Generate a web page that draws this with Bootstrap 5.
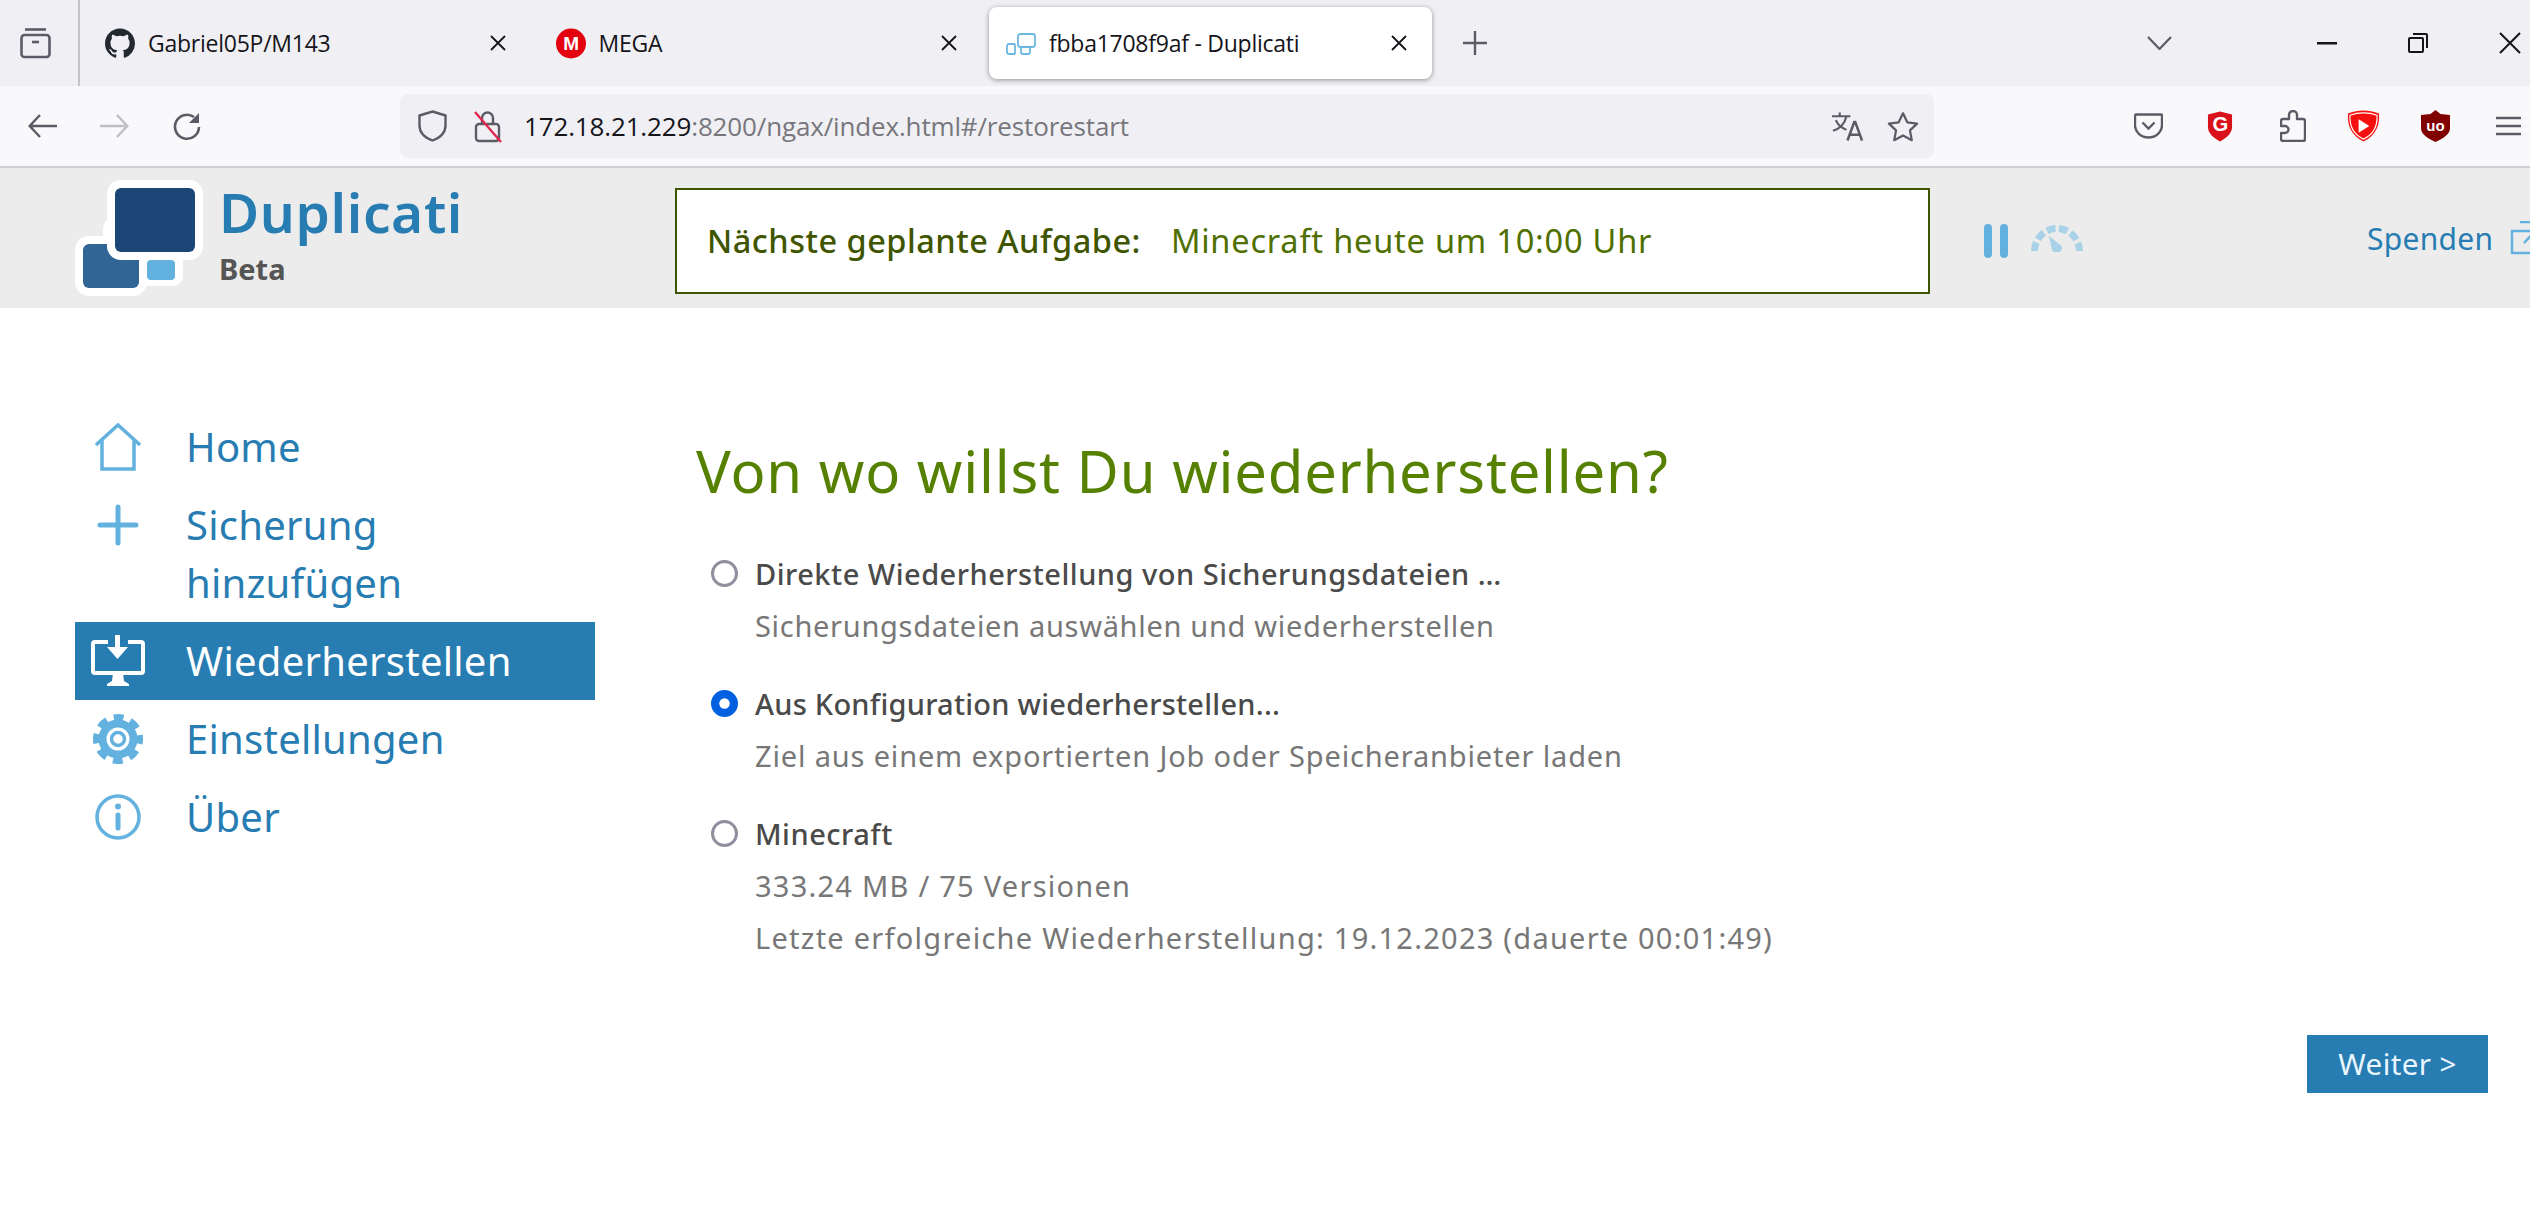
<!DOCTYPE html>
<html lang="de">
<head>
<meta charset="UTF-8">
<title>fbba1708f9af - Duplicati</title>
<link href="https://cdn.jsdelivr.net/npm/bootstrap@5.3.3/dist/css/bootstrap.min.css" rel="stylesheet">
<style>
  html, body { height: 1228px; overflow: hidden; background: #fff; }
  body { font-family: "Noto Sans", sans-serif; }

  /* browser chrome */
  .tab-strip { height: 86px; background: #f0f0f4; font-family: "Open Sans", sans-serif; font-size: 23px; color: #15141a; }
  .strip-toggle { width: 80px; height: 86px; padding-left: 20px; border-right: 2px solid #c4c4c8; flex: none; margin-right: 8px; }
  .ff-tab { width: 443px; height: 72px; padding-left: 17px; margin-right: 7.5px; border-radius: 8px; flex: none; letter-spacing: -.25px; }
  .ff-tab.is-on { background: #fff; box-shadow: 0 1px 5px rgba(0,0,0,.4); }
  .tab-fav { width: 30px; height: 31px; margin-right: 13px; flex: none; }
  .tab-close { width: 18px; height: 18px; margin-right: 24px; flex: none; }
  .tab-label { flex-grow: 1; white-space: nowrap; }
  .new-tab { margin-left: 23px; flex: none; }
  .win-chev { margin-left: 660px; flex: none; }
  .win-min { margin-left: 145px; flex: none; }
  .win-max { margin-left: 71px; flex: none; }
  .win-x { margin-left: 71px; flex: none; }

  .tool-bar { height: 82px; background: #f9f9fb; border-bottom: 2px solid #cfcfd1; padding-left: 28px; flex: none; }
  .nav-gap { margin-left: 43px; }
  .url-box { width: 1534px; height: 64px; background: #f0f0f4; border-radius: 8px; margin-left: 198px; padding-left: 17px; flex: none; margin-right: 200px; font-family: "Open Sans", sans-serif; font-size: 26px; color: #77767c; letter-spacing: -.15px; white-space: nowrap; }
  .url-host { color: #15141a; }
  .url-text { margin-left: 22px; }
  .lock-ic { margin-left: 26px; flex: none; }
  .star-ic { margin-left: 24px; margin-right: 15px; flex: none; }
  .ext-btn { flex: none; }
  .ext-g { margin-left: 44px; }
  .ext-puzzle { margin-left: 47px; }
  .ext-play { margin-left: 41px; }
  .ext-ub { margin-left: 41px; }
  .ext-menu { margin-left: 46px; }

  /* duplicati header */
  .app-head { height: 140px; background: #ececec; padding-left: 75px; }
  .brand { width: 600px; flex: none; }
  .brand-text { margin-left: 16px; margin-bottom: 8px; }
  .brand-name { font-size: 55px; font-weight: 600; line-height: 62px; color: #277cb2; letter-spacing: .6px; }
  .brand-sub { font-size: 29px; font-weight: 700; line-height: 36px; color: #555; margin-top: 8px; }
  .next-box { width: 1255px; height: 106px; margin-top: 6px; background: #fff; border: 2px solid #3f5500; padding-left: 30px; font-size: 32.5px; flex: none; white-space: nowrap; letter-spacing: .5px; }
  .next-key { color: #3f5500; font-weight: 500; margin-right: 30px; }
  .next-val { color: #4f6f00; letter-spacing: .8px; }
  .pause-ic { margin-left: 54px; margin-top: 6px; flex: none; }
  .gauge-ic { margin-left: 23px; flex: none; }
  .donate { margin-left: 284px; color: #277cb2; font-size: 30px; letter-spacing: .3px; white-space: nowrap; }
  .donate svg { margin-left: 17px; flex: none; }

  /* page */
  .side-col { width: 520px; margin-left: 75px; margin-right: 101px; padding-top: 100px; flex: none; }
  .side-item { padding: 10px 0; color: #277cb2; font-size: 40px; line-height: 58px; letter-spacing: .25px; }
  .side-item.is-on { background: #277cb2; color: #fff; }
  .side-ic { width: 86px; margin-right: 25px; flex: none; height: 58px; }
  .main-col { flex-grow: 1; padding-right: 42px; }
  .page-title { color: #558000; font-size: 58px; line-height: 76px; font-weight: 400; margin: 125px 0 0; letter-spacing: .78px; white-space: nowrap; }
  .opt-list { margin-top: 39px; }
  .opt-row { padding-left: 15px; margin-bottom: 26px; font-size: 29px; line-height: 52px; white-space: nowrap; }
  .opt-row .form-check-input { width: 27px; height: 27px; margin: 12px 17px 0 0; border: 3px solid #8f8f9d; flex: none; }
  .opt-row .form-check-input:checked { background-color: #0060df; border-color: #0060df; }
  .opt-title { color: #4a4a4a; font-weight: 500; letter-spacing: .5px; }
  .opt-title.is-tight { letter-spacing: .25px; }
  .opt-desc { color: #777; letter-spacing: .7px; }
  .opt-desc.is-mid { letter-spacing: .84px; }
  .opt-desc.is-wide { letter-spacing: 1.25px; }
  .next-wrap { margin-top: 71px; }
  .next-btn { background: #277cb2; color: #eaf6ff; font-size: 29.5px; line-height: 58px; width: 181px; height: 58px; padding: 0; border: 0; border-radius: 0; letter-spacing: .4px; }
  .next-btn:hover { background: #277cb2; color: #eaf6ff; }
</style>
</head>
<body>

<!-- tabs -->
<div class="tab-strip d-flex align-items-center">
  <div class="strip-toggle d-flex align-items-center">
    <svg width="31" height="32" viewBox="0 0 31 32" fill="none" stroke="#5b5b66" stroke-width="2.6"><path d="M5 2.5h21"/><rect x="1.5" y="8" width="28" height="22" rx="3"/><path d="M12 15h7"/></svg>
  </div>
  <div class="ff-tab d-flex align-items-center">
    <svg class="tab-fav" viewBox="0 0 16 16" fill="#24292f"><path d="M8 0C3.58 0 0 3.58 0 8c0 3.54 2.29 6.53 5.47 7.59.4.07.55-.17.55-.38 0-.19-.01-.82-.01-1.49-2.01.37-2.53-.49-2.69-.94-.09-.23-.48-.94-.82-1.13-.28-.15-.68-.52-.01-.53.63-.01 1.08.58 1.23.82.72 1.21 1.87.87 2.33.66.07-.52.28-.87.51-1.07-1.78-.2-3.64-.89-3.64-3.95 0-.87.31-1.59.82-2.15-.08-.2-.36-1.02.08-2.12 0 0 .67-.21 2.2.82.64-.18 1.32-.27 2-.27.68 0 1.36.09 2 .27 1.53-1.04 2.2-.82 2.2-.82.44 1.1.16 1.92.08 2.12.51.56.82 1.27.82 2.15 0 3.07-1.87 3.75-3.65 3.95.29.25.54.73.54 1.48 0 1.07-.01 1.93-.01 2.2 0 .21.15.46.55.38A8.013 8.013 0 0016 8c0-4.42-3.58-8-8-8z"/></svg>
    <span class="tab-label">Gabriel05P/M143</span>
    <svg class="tab-close" viewBox="0 0 18 18" stroke="#15141a" stroke-width="1.8"><path d="M2 2l14 14M16 2L2 16"/></svg>
  </div>
  <div class="ff-tab d-flex align-items-center">
    <svg class="tab-fav" viewBox="0 0 30 31"><circle cx="15" cy="15.5" r="15" fill="#e3000f"/><text x="15" y="22" text-anchor="middle" font-family="Liberation Sans" font-weight="700" font-size="19" fill="#fff">M</text></svg>
    <span class="tab-label">MEGA</span>
    <svg class="tab-close" viewBox="0 0 18 18" stroke="#15141a" stroke-width="1.8"><path d="M2 2l14 14M16 2L2 16"/></svg>
  </div>
  <div class="ff-tab is-on d-flex align-items-center">
    <svg class="tab-fav" viewBox="0 -5 30 31" fill="none" stroke="#6db8e2" stroke-width="1.8"><path d="M9 11H3a2 2 0 00-2 2v6a2 2 0 002 2h6"/><path d="M9 11v10"/><path d="M15 15v4a2 2 0 002 2h5a2 2 0 002-2v-4"/><rect x="12" y="1" width="17" height="13" rx="2.500"/></svg>
    <span class="tab-label">fbba1708f9af - Duplicati</span>
    <svg class="tab-close" viewBox="0 0 18 18" stroke="#15141a" stroke-width="1.8"><path d="M2 2l14 14M16 2L2 16"/></svg>
  </div>
  <svg class="new-tab" width="24" height="24" viewBox="0 0 24 24" stroke="#5b5b66" stroke-width="2.4"><path d="M12 0v24M0 12h24"/></svg>
  <svg class="win-chev" width="25" height="14" viewBox="0 0 25 14" fill="none" stroke="#5b5b66" stroke-width="2.2"><path d="M1 1l11.500 12L24 1"/></svg>
  <svg class="win-min" width="20" height="3" viewBox="0 0 20 3"><rect width="20" height="2.500" fill="#15141a"/></svg>
  <svg class="win-max" width="20" height="20" viewBox="0 0 20 20" fill="none" stroke="#15141a" stroke-width="2"><rect x="1" y="5" width="14" height="14" rx="1"/><path d="M5 1h13a1 1 0 011 1v13"/></svg>
  <svg class="win-x" width="22" height="22" viewBox="0 0 22 22" stroke="#15141a" stroke-width="2"><path d="M1 1l20 20M21 1L1 21"/></svg>
</div>

<!-- toolbar -->
<div class="tool-bar d-flex align-items-center">
  <svg class="ext-btn" width="29" height="24" viewBox="0 0 29 24" fill="none" stroke="#5b5b66" stroke-width="2.4"><path d="M29 12H2M12 1L1.700 12 12 23"/></svg>
  <svg class="ext-btn nav-gap" width="30" height="24" viewBox="0 0 30 24" fill="none" stroke="#bfbfc4" stroke-width="2.4"><path d="M0 12h27M17 1l10.300 11L17 23"/></svg>
  <svg class="ext-btn nav-gap" width="29" height="29" viewBox="0 0 29 29" fill="none" stroke="#5b5b66" stroke-width="2.6"><path d="M26 15a12 12 0 11-5-10"/><path d="M26 1v10h-10z" stroke="none" fill="#5b5b66"/></svg>
  <div class="url-box d-flex align-items-center">
    <svg class="flex-none" width="31" height="32" viewBox="0 0 31 32" fill="none" stroke="#5b5b66" stroke-width="2.4"><path d="M15.500 1.500l13 4v10c0 7-5 12-13 15-8-3-13-8-13-15v-10z"/></svg>
    <svg class="lock-ic" width="28" height="33" viewBox="0 0 28 33" fill="none"><rect x="2" y="14" width="23" height="17" rx="3" stroke="#5b5b66" stroke-width="2.400"/><path d="M8 14V8a5.500 5.500 0 0111 0v6" stroke="#5b5b66" stroke-width="2.400"/><path d="M1 2l26 30" stroke="#e22850" stroke-width="2.400"/></svg>
    <span class="url-text"><span class="url-host">172.18.21.229</span>:8200/ngax/index.html#/restorestart</span>
    <span class="flex-grow-1"></span>
    <svg class="flex-none" width="32" height="30" viewBox="0 0 33 30" fill="none" stroke="#5b5b66" stroke-width="2.200"><path d="M1 5h19M9 1v4M16 5c-2 8-7 13-14 15M5 9c2 5 6 8 11 10"/><path d="M17 30l7-19h1l7 19M19.500 24h10" stroke-width="2.600"/></svg>
    <svg class="star-ic" width="32" height="31" viewBox="0 0 34 32" fill="none" stroke="#5b5b66" stroke-width="2.400"><path d="M17 2l4.600 9.500 10.400 1.400-7.600 7.200 1.900 10.400L17 25.500l-9.300 5 1.900-10.400L2 12.900l10.400-1.400z" stroke-linejoin="round"/></svg>
  </div>
  <svg class="ext-btn" width="29" height="26" viewBox="0 0 29 26" fill="none" stroke="#5b5b66" stroke-width="2.400"><path d="M2 1.500h25a1 1 0 011 1V12c0 7-6 12.500-13.500 12.500S1 19 1 12V2.500a1 1 0 011-1z"/><path d="M8.500 9.500l6 6 6-6"/></svg>
  <svg class="ext-btn ext-g" width="26" height="31" viewBox="0 0 27 31"><path d="M1 3l12.500-3L26 3v13c0 6-5 11-12.500 15C6 27 1 22 1 16z" fill="#d8111b"/><text x="14" y="20" text-anchor="middle" font-family="Liberation Sans" font-weight="700" font-size="21" fill="#fff">G</text></svg>
  <svg class="ext-btn ext-puzzle" width="26" height="32" viewBox="0 0 26 32" fill="none" stroke="#5b5b66" stroke-width="2.400"><path d="M3 31a2 2 0 01-2-2v-6h4a3 3 0 000-7H1v-5a2 2 0 012-2h6V5a4 4 0 018 0v4h6a2 2 0 012 2v18a2 2 0 01-2 2z" stroke-linejoin="round"/></svg>
  <svg class="ext-btn ext-play" width="33" height="32" viewBox="0 0 34 32"><path d="M17 0c5 0 11 1 16 3 1 13-4 23-16 29C5 26 0 16 1 3c5-2 11-3 16-3z" fill="#f50f0f"/><path d="M17 2.500c5 0 10 1 14 2.500.5 11-4 20-14 24.500C7 25 2.500 16 3 5c4-1.500 9-2.500 14-2.500z" fill="none" stroke="#fff" stroke-width="1.200"/><path d="M12 9l11 7-11 7z" fill="#fff"/></svg>
  <svg class="ext-btn ext-ub" width="29" height="32" viewBox="0 0 29 32"><path d="M14.500 0l5 4 9.500 1v13c0 6-6 10-14.500 14C6 28 0 24 0 18V5l9.500-1z" fill="#800000"/><text x="14.500" y="21" text-anchor="middle" font-family="Liberation Sans" font-weight="700" font-size="15" fill="#fff">uo</text></svg>
  <svg class="ext-btn ext-menu" width="25" height="20" viewBox="0 0 25 20" stroke="#5b5b66" stroke-width="2.500"><path d="M0 2h25M0 10h25M0 18h25"/></svg>
</div>

<!-- app header -->
<div class="app-head d-flex align-items-center">
  <div class="brand d-flex align-items-center">
    <svg class="flex-none" width="128" height="116" viewBox="0 0 128 116">
      <rect x="28" y="38" width="80" height="68" rx="10" fill="#fff"/>
      <rect x="72" y="80" width="28" height="20" rx="4" fill="#63b1df"/>
      <rect x="0" y="56" width="72" height="60" rx="14" fill="#fff"/>
      <rect x="8" y="64" width="56" height="44" rx="6" fill="#316596"/>
      <rect x="32" y="0" width="96" height="80" rx="14" fill="#fff"/>
      <rect x="40" y="8" width="80" height="64" rx="6" fill="#1c4675"/>
    </svg>
    <div class="brand-text">
      <div class="brand-name">Duplicati</div>
      <div class="brand-sub">Beta</div>
    </div>
  </div>
  <div class="next-box d-flex align-items-center">
    <span class="next-key">Nächste geplante Aufgabe:</span>
    <span class="next-val">Minecraft heute um 10:00 Uhr</span>
  </div>
  <svg class="pause-ic" width="24" height="34" viewBox="0 0 24 34" fill="#63b1df"><rect width="8" height="34" rx="4"/><rect x="16" width="8" height="34" rx="4"/></svg>
  <svg class="gauge-ic" width="52" height="28" viewBox="0 0 52 28" fill="none">
    <path d="M3.500 27A22.500 22.500 0 0148.500 27" stroke="#a9d2e8" stroke-width="7" stroke-dasharray="8.870 3.500"/>
    <path d="M18 12l12.500 10a5 5 0 11-9.500 4z" fill="#a9d2e8"/>
  </svg>
  <div class="donate d-flex align-items-center">
    <span>Spenden</span>
    <svg width="26" height="34" viewBox="0 0 26 34" fill="none" stroke="#63b1df" stroke-width="2.400"><path d="M24 10H2v22h22V20M10 1h16M14 22L26 9"/></svg>
  </div>
</div>

<!-- page -->
<div class="d-flex">
  <nav class="side-col">
    <div class="side-item d-flex">
      <div class="side-ic d-flex align-items-center justify-content-center">
        <svg width="46" height="48" viewBox="0 0 46 48" fill="none" stroke="#63b1df" stroke-width="3.500"><path d="M1 22L23 2l22 20M7 17v29h32V17"/></svg>
      </div>
      <div>Home</div>
    </div>
    <div class="side-item d-flex">
      <div class="side-ic d-flex align-items-center justify-content-center">
        <svg width="42" height="42" viewBox="0 0 42 42" stroke="#63b1df" stroke-width="5" stroke-linecap="round"><path d="M21 3v36M3 21h36"/></svg>
      </div>
      <div>Sicherung<br>hinzufügen</div>
    </div>
    <div class="side-item is-on d-flex">
      <div class="side-ic d-flex align-items-center justify-content-center">
        <svg width="54" height="52" viewBox="0 0 54 52" fill="none"><path d="M17 7H4a2 2 0 00-2 2v27a2 2 0 002 2h46a2 2 0 002-2V9a2 2 0 00-2-2H37" stroke="#fff" stroke-width="4"/><path d="M24 0h5v12h8L26.500 24 16 12h8z" fill="#fff"/><path d="M22 38h10l1 8 5 3v2H16v-2l5-3z" fill="#fff"/></svg>
      </div>
      <div>Wiederherstellen</div>
    </div>
    <div class="side-item d-flex">
      <div class="side-ic d-flex align-items-center justify-content-center">
        <svg width="50" height="50" viewBox="0 0 50 50" fill="none"><circle cx="25" cy="25" r="21" stroke="#63b1df" stroke-width="8" stroke-dasharray="9.500 6.990" stroke-dashoffset="4.750"/><circle cx="25" cy="25" r="15.500" stroke="#63b1df" stroke-width="8"/><circle cx="25" cy="25" r="6.500" stroke="#63b1df" stroke-width="3.500"/></svg>
      </div>
      <div>Einstellungen</div>
    </div>
    <div class="side-item d-flex">
      <div class="side-ic d-flex align-items-center justify-content-center">
        <svg width="46" height="46" viewBox="0 0 46 46" fill="none" stroke="#63b1df"><circle cx="23" cy="23" r="21" stroke-width="3.500"/><path d="M23 21v13" stroke-width="5" stroke-linecap="round"/><circle cx="23" cy="12.500" r="3" fill="#63b1df" stroke="none"/></svg>
      </div>
      <div>Über</div>
    </div>
  </nav>

  <main class="main-col">
    <h1 class="page-title">Von wo willst Du wiederherstellen?</h1>
    <div class="opt-list">
      <div class="opt-row d-flex">
        <input class="form-check-input" type="radio" name="src">
        <div>
          <div class="opt-title">Direkte Wiederherstellung von Sicherungsdateien …</div>
          <div class="opt-desc">Sicherungsdateien auswählen und wiederherstellen</div>
        </div>
      </div>
      <div class="opt-row d-flex">
        <input class="form-check-input" type="radio" name="src" checked>
        <div>
          <div class="opt-title is-tight">Aus Konfiguration wiederherstellen...</div>
          <div class="opt-desc is-mid">Ziel aus einem exportierten Job oder Speicheranbieter laden</div>
        </div>
      </div>
      <div class="opt-row d-flex">
        <input class="form-check-input" type="radio" name="src">
        <div>
          <div class="opt-title">Minecraft</div>
          <div class="opt-desc is-wide">333.24 MB / 75 Versionen</div>
          <div class="opt-desc is-wide">Letzte erfolgreiche Wiederherstellung: 19.12.2023 (dauerte 00:01:49)</div>
        </div>
      </div>
    </div>
    <div class="next-wrap d-flex justify-content-end">
      <button class="btn next-btn" type="button">Weiter &gt;</button>
    </div>
  </main>
</div>

<script src="https://cdn.jsdelivr.net/npm/bootstrap@5.3.3/dist/js/bootstrap.bundle.min.js"></script>
</body>
</html>
